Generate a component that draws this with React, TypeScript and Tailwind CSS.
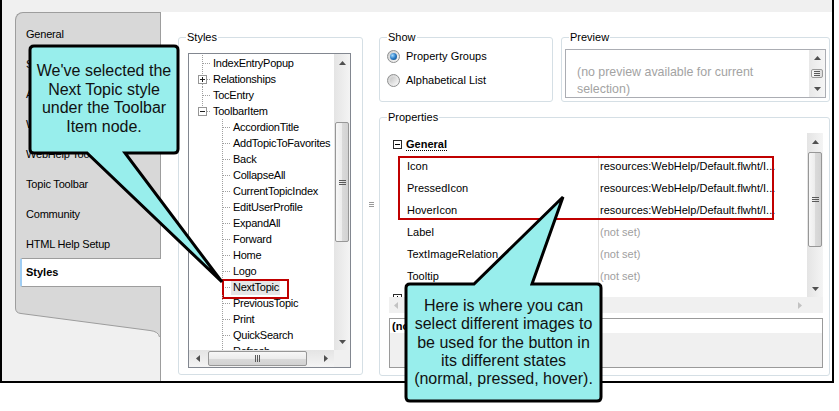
import React from 'react';

const FONT = "font-['Liberation_Sans',Arial,sans-serif]";

function Arrow({ dir, color = '#505050' }: { dir: 'up' | 'down' | 'left' | 'right'; color?: string }) {
  const vert = dir === 'up' || dir === 'down';
  const w = vert ? 7 : 4;
  const h = vert ? 4 : 7;
  const pts = {
    up: '0,4 7,4 3.5,0',
    down: '0,0 7,0 3.5,4',
    left: '4,0 4,7 0,3.5',
    right: '0,0 0,7 4,3.5',
  }[dir];
  return (
    <svg width={w} height={h} viewBox={`0 0 ${w} ${h}`} className="block">
      <polygon points={pts} fill={color} />
    </svg>
  );
}

function GripH() {
  return (
    <svg width="7" height="5" viewBox="0 0 7 5" className="block">
      <g stroke="#5a5a5a" shapeRendering="crispEdges">
        <line x1="0" y1="0.5" x2="7" y2="0.5" />
        <line x1="0" y1="2.5" x2="7" y2="2.5" />
        <line x1="0" y1="4.5" x2="7" y2="4.5" />
      </g>
    </svg>
  );
}

function GripV() {
  return (
    <svg width="5" height="7" viewBox="0 0 5 7" className="block">
      <g stroke="#5a5a5a" shapeRendering="crispEdges">
        <line x1="0.5" y1="0" x2="0.5" y2="7" />
        <line x1="2.5" y1="0" x2="2.5" y2="7" />
        <line x1="4.5" y1="0" x2="4.5" y2="7" />
      </g>
    </svg>
  );
}

function VScroll({ thumb }: { thumb: string }) {
  return (
    <div className="w-[16px] h-full shrink-0 flex flex-col bg-[linear-gradient(to_right,#e4e4e4,#f4f4f4)]">
      <div className="h-[17px] shrink-0 flex items-center justify-center">
        <Arrow dir="up" />
      </div>
      <div className="flex-1 min-h-0">
        <div
          className={`mx-[1px] rounded-[2px] border border-[#979797] bg-[linear-gradient(to_right,#f7f7f7,#ececec_50%,#dadada_51%,#d2d2d2)] flex items-center justify-center ${thumb}`}
        >
          <GripH />
        </div>
      </div>
      <div className="h-[17px] shrink-0 flex items-center justify-center">
        <Arrow dir="down" />
      </div>
    </div>
  );
}

function Group({ label, className, children }: { label: string; className: string; children?: React.ReactNode }) {
  return (
    <div className={`relative shrink-0 border border-[#d5dfe5] rounded-[3px] ${className}`}>
      <span className="absolute left-[7px] top-[-7px] bg-white px-[1px] leading-[13px] whitespace-nowrap">{label}</span>
      {children}
    </div>
  );
}

function Radio({ checked }: { checked?: boolean }) {
  return (
    <span className="w-[13px] h-[13px] shrink-0 rounded-full border border-[#8e8f8f] bg-[linear-gradient(135deg,#cfcfcf,#f8f8f8)] flex items-center justify-center">
      {checked ? (
        <span className="w-[7px] h-[7px] rounded-full bg-[radial-gradient(circle_at_35%_35%,#a6dcff,#2b7cc6_50%,#0d3e70)]" />
      ) : (
        <span className="w-[7px] h-[7px] rounded-full bg-[linear-gradient(135deg,#c4c4c4,#f4f4f4)]" />
      )}
    </span>
  );
}

const dot = { stroke: '#a0a0a0', strokeDasharray: '1 1', shapeRendering: 'crispEdges' as const };

function Conn({ level, box, last }: { level: 0 | 1; box?: '+' | '-'; last?: boolean }) {
  if (level === 0) {
    return (
      <svg width="24" height="16" className="block shrink-0">
        {box ? (
          <>
            <line x1="13.5" y1="0" x2="13.5" y2="4" {...dot} />
            {!last && <line x1="13.5" y1="13" x2="13.5" y2="16" {...dot} />}
            <line x1="18" y1="8.5" x2="22" y2="8.5" {...dot} />
            <rect x="9.5" y="4.5" width="8" height="8" fill="#ffffff" stroke="#969696" shapeRendering="crispEdges" />
            <line x1="11" y1="8.5" x2="16" y2="8.5" stroke="#202020" shapeRendering="crispEdges" />
            {box === '+' && <line x1="13.5" y1="6" x2="13.5" y2="11" stroke="#202020" shapeRendering="crispEdges" />}
          </>
        ) : (
          <>
            <line x1="13.5" y1="0" x2="13.5" y2={last ? 9 : 16} {...dot} />
            <line x1="14" y1="8.5" x2="22" y2="8.5" {...dot} />
          </>
        )}
      </svg>
    );
  }
  return (
    <svg width="44" height="16" className="block shrink-0">
      <line x1="33.5" y1="0" x2="33.5" y2="16" {...dot} />
      <line x1="34" y1="8.5" x2="42" y2="8.5" {...dot} />
    </svg>
  );
}

type Row = { t: string; lvl: 0 | 1; box?: '+' | '-'; last?: boolean; sel?: boolean };

const treeRows: Row[] = [
  { t: 'IndexEntryPopup', lvl: 0 },
  { t: 'Relationships', lvl: 0, box: '+' },
  { t: 'TocEntry', lvl: 0 },
  { t: 'ToolbarItem', lvl: 0, box: '-', last: true },
  { t: 'AccordionTitle', lvl: 1 },
  { t: 'AddTopicToFavorites', lvl: 1 },
  { t: 'Back', lvl: 1 },
  { t: 'CollapseAll', lvl: 1 },
  { t: 'CurrentTopicIndex', lvl: 1 },
  { t: 'EditUserProfile', lvl: 1 },
  { t: 'ExpandAll', lvl: 1 },
  { t: 'Forward', lvl: 1 },
  { t: 'Home', lvl: 1 },
  { t: 'Logo', lvl: 1 },
  { t: 'NextTopic', lvl: 1, sel: true },
  { t: 'PreviousTopic', lvl: 1 },
  { t: 'Print', lvl: 1 },
  { t: 'QuickSearch', lvl: 1 },
  { t: 'Refresh', lvl: 1 },
];

function TabStrip() {
  const tabs = ['General', 'Size', 'About', 'WebHelp Setup', 'WebHelp Toolbar', 'Topic Toolbar', 'Community', 'HTML Help Setup'];
  return (
    <div className="w-[145px] shrink-0 flex flex-col relative z-10">
      <div className="h-[296px] bg-[#d8d8d8] border-l border-t border-[#9d9d9d] rounded-tl-[8px] pt-[6px]">
        {tabs.map((t) => (
          <div key={t} className="h-[30px] flex items-center pl-[10px] whitespace-nowrap tracking-[-0.2px]">
            {t}
          </div>
        ))}
        <div className="-mt-[1px] ml-[4px] w-[141px] h-[29px] bg-white border-y border-[#9d9d9d] border-l-2 border-l-[#9fcdf3] rounded-l-[2px] flex items-center pl-[4px] font-bold">
          Styles
        </div>
      </div>
      <svg width="145" height="30" viewBox="0 0 145 30" className="block">
        <path d="M0,0 H145 V29 Q143.5,23.5 135,22.5 L6,5.5 Q0.5,5 0.5,0 Z" fill="#d8d8d8" />
        <path d="M0.5,0 Q0.5,5 6,5.5 L135,22.5 Q143.5,23.5 144.5,29" fill="none" stroke="#9d9d9d" />
      </svg>
    </div>
  );
}

function StylesGroup() {
  return (
    <Group label="Styles" className="w-[185px] h-[338px] pl-[9px] pt-[15px]">
      <div className="w-[163px] h-[315px] border border-[#828790] flex flex-col bg-white">
        <div className="flex h-[296px]">
          <div className="w-[145px] h-full overflow-hidden relative pt-[1px] tracking-[-0.25px]">
            {treeRows.map((r) => (
              <div key={r.t} className="h-[16px] flex items-center relative whitespace-nowrap">
                <Conn level={r.lvl} box={r.box} last={r.last} />
                {r.sel ? (
                  <>
                    <span className="-ml-[2px] pl-[2px] pr-[1px] h-[15px] leading-[15px] bg-[#e6e6e6]">{r.t}</span>
                    <span className="absolute left-[33px] top-0 w-[67px] h-[20px] border-2 border-[#c00000]" />
                  </>
                ) : (
                  <span className="leading-[16px]">{r.t}</span>
                )}
              </div>
            ))}
          </div>
          <VScroll thumb="mt-[51px] h-[120px]" />
        </div>
        <div className="flex h-[17px]">
          <div className="w-[145px] h-full flex items-center bg-[linear-gradient(to_bottom,#e4e4e4,#f4f4f4)]">
            <div className="w-[17px] h-full flex items-center justify-center">
              <Arrow dir="left" />
            </div>
            <div className="ml-[2px] w-[99px] h-[15px] rounded-[2px] border border-[#979797] bg-[linear-gradient(to_bottom,#f7f7f7,#ececec_50%,#dadada_51%,#d2d2d2)] flex items-center justify-center">
              <GripV />
            </div>
            <div className="flex-1" />
            <div className="w-[17px] h-full flex items-center justify-center">
              <Arrow dir="right" />
            </div>
          </div>
          <div className="w-[16px] h-full bg-[#f0f0f0]" />
        </div>
      </div>
    </Group>
  );
}

const props = [
  { n: 'Icon', v: 'resources:WebHelp/Default.flwht/I...', set: true },
  { n: 'PressedIcon', v: 'resources:WebHelp/Default.flwht/I...', set: true },
  { n: 'HoverIcon', v: 'resources:WebHelp/Default.flwht/I...', set: true },
  { n: 'Label', v: '(not set)' },
  { n: 'TextImageRelation', v: '(not set)' },
  { n: 'Tooltip', v: '(not set)' },
];

function CatBox({ plus }: { plus?: boolean }) {
  return (
    <svg width="9" height="9" viewBox="0 0 9 9" className="block shrink-0">
      <rect x="0.5" y="0.5" width="8" height="8" fill="#ffffff" stroke="#2a2a2a" shapeRendering="crispEdges" />
      <line x1="2" y1="4.5" x2="7" y2="4.5" stroke="#000" shapeRendering="crispEdges" />
      {plus && <line x1="4.5" y1="2" x2="4.5" y2="7" stroke="#000" shapeRendering="crispEdges" />}
    </svg>
  );
}

function RightCol() {
  return (
    <div className="w-[451px] shrink-0 flex flex-col">
      <div className="flex gap-[8px]">
        <Group label="Show" className="w-[174px] h-[65px] pl-[7px] pt-[12px]">
          <div className="flex flex-col gap-[11px]">
            <div className="h-[13px] flex items-center gap-[6px] whitespace-nowrap">
              <Radio checked />
              <span>Property Groups</span>
            </div>
            <div className="h-[13px] flex items-center gap-[6px] whitespace-nowrap">
              <Radio />
              <span>Alphabetical List</span>
            </div>
          </div>
        </Group>
        <Group label="Preview" className="w-[269px] h-[65px] pl-[3px] pt-[11px]">
          <div className="w-[261px] h-[49px] border border-[#abadb3] flex bg-white">
            <div className="flex-1 pl-[11px] pt-[14px] text-[12.4px] leading-[17px] text-[#a3a3a3] whitespace-nowrap">
              (no preview available for current
              <br />
              selection)
            </div>
            <div className="w-[16px] h-full flex flex-col bg-[linear-gradient(to_right,#e8e8e8,#f6f6f6)]">
              <div className="h-[16px] flex items-center justify-center">
                <Arrow dir="up" />
              </div>
              <div className="flex-1 flex items-center justify-center">
                <div className="w-[12px] h-[9px] rounded-[2px] border border-[#9a9a9a] bg-[linear-gradient(to_right,#f7f7f7,#dcdcdc)] flex items-center justify-center">
                  <svg width="6" height="5" viewBox="0 0 6 5" className="block">
                    <g stroke="#5a5a5a" shapeRendering="crispEdges">
                      <line x1="0" y1="0.5" x2="6" y2="0.5" />
                      <line x1="0" y1="2.5" x2="6" y2="2.5" />
                      <line x1="0" y1="4.5" x2="6" y2="4.5" />
                    </g>
                  </svg>
                </div>
              </div>
              <div className="h-[16px] flex items-center justify-center">
                <Arrow dir="down" />
              </div>
            </div>
          </div>
        </Group>
      </div>
      <Group label="Properties" className="mt-[15px] w-[451px] h-[259px] pl-[9px] pt-[15px]">
        <div className="w-[434px] flex flex-col">
          <div className="flex h-[164px]">
            <div className="w-[418px] h-full relative overflow-hidden bg-white">
              <div className="h-[22px] flex items-center pl-[4px] gap-[4px]">
                <CatBox />
                <span className="font-bold leading-[12px] border-b border-dotted border-black">General</span>
              </div>
              {props.map((p) => (
                <div key={p.n} className="h-[22px] flex">
                  <div className="w-[209px] h-full flex items-center pl-[18px] whitespace-nowrap">{p.n}</div>
                  <div
                    className={`flex-1 h-full flex items-center pl-[1px] border-l border-[#dedede] whitespace-nowrap ${
                      p.set ? 'text-black' : 'text-[#a0a0a0]'
                    }`}
                  >
                    {p.v}
                  </div>
                </div>
              ))}
              <div className="h-[22px] flex items-center pl-[4px]">
                <CatBox plus />
              </div>
              <span className="absolute left-[9px] top-[23px] w-[376px] h-[64px] border-2 border-[#c00000]" />
            </div>
            <VScroll thumb="mt-[2px] h-[95px]" />
          </div>
          <div className="flex h-[16px]">
            <div className="w-[418px] h-full flex items-center justify-between px-[5px] bg-[#f0f0f0]">
              <Arrow dir="left" color="#c2c2c2" />
              <Arrow dir="right" color="#c2c2c2" />
            </div>
            <div className="w-[16px] h-full bg-[#f0f0f0]" />
          </div>
          <div className="mt-[5px] h-[50px] border border-[#9a9a9a] flex flex-col">
            <div className="h-[14px] bg-white pl-[2px] leading-[14px] font-bold">(none)</div>
            <div className="flex-1 bg-[#f0f0f0]" />
          </div>
        </div>
      </Group>
    </div>
  );
}

function Page() {
  return (
    <div className="w-[672px] shrink-0 bg-white border-l border-[#9d9d9d] pt-[25px] pl-[17px] flex items-start">
      <StylesGroup />
      <div className="w-[16px] h-[338px] shrink-0 pt-[165px] pl-[6px]">
        <svg width="5" height="5" viewBox="0 0 5 5" className="block">
          <g stroke="#9a9a9a" shapeRendering="crispEdges">
            <line x1="0" y1="0.5" x2="5" y2="0.5" />
            <line x1="0" y1="2.5" x2="5" y2="2.5" />
            <line x1="0" y1="4.5" x2="5" y2="4.5" />
          </g>
        </svg>
      </div>
      <RightCol />
    </div>
  );
}

function Callouts() {
  return (
    <>
      <svg width="839" height="411" viewBox="0 0 839 411" className="absolute left-0 top-0 pointer-events-none z-20">
        <path
          d="M34,46 H174 Q178,46 178,50 V149 Q178,153 174,153 H125 L222,282 L87,153 H34 Q30,153 30,149 V50 Q30,46 34,46 Z"
          fill="#98eeec"
          stroke="#000"
          strokeWidth="3"
        />
        <path
          d="M410,284 H474 L563,197 L532,284 H597 Q601,284 601,288 V397 Q601,401 597,401 H410 Q406,401 406,397 V288 Q406,284 410,284 Z"
          fill="#98eeec"
          stroke="#000"
          strokeWidth="3"
        />
      </svg>
      <div className="absolute left-[30px] top-[62px] w-[148px] z-30 text-center text-[16px] leading-[18.67px] text-[#111] whitespace-nowrap">
        We've selected the
        <br />
        Next Topic style
        <br />
        under the Toolbar
        <br />
        Item node.
      </div>
      <div className="absolute left-[406px] top-[297px] w-[195px] z-30 text-center text-[16px] leading-[18.3px] text-[#111] whitespace-nowrap">
        Here is where you can
        <br />
        select different images to
        <br />
        be used for the button in
        <br />
        its different states
        <br />
        (normal, pressed, hover).
      </div>
    </>
  );
}

export default function App() {
  return (
    <div className={`relative w-[839px] h-[411px] bg-white overflow-hidden ${FONT} text-[11px] text-black`}>
      <div className="w-[834px] h-[383px] border-l-2 border-r-2 border-b-2 border-black bg-[#f0f0f0] pt-[12px] flex">
        <div className="w-[13px] shrink-0" />
        <TabStrip />
        <Page />
      </div>
      <Callouts />
    </div>
  );
}
